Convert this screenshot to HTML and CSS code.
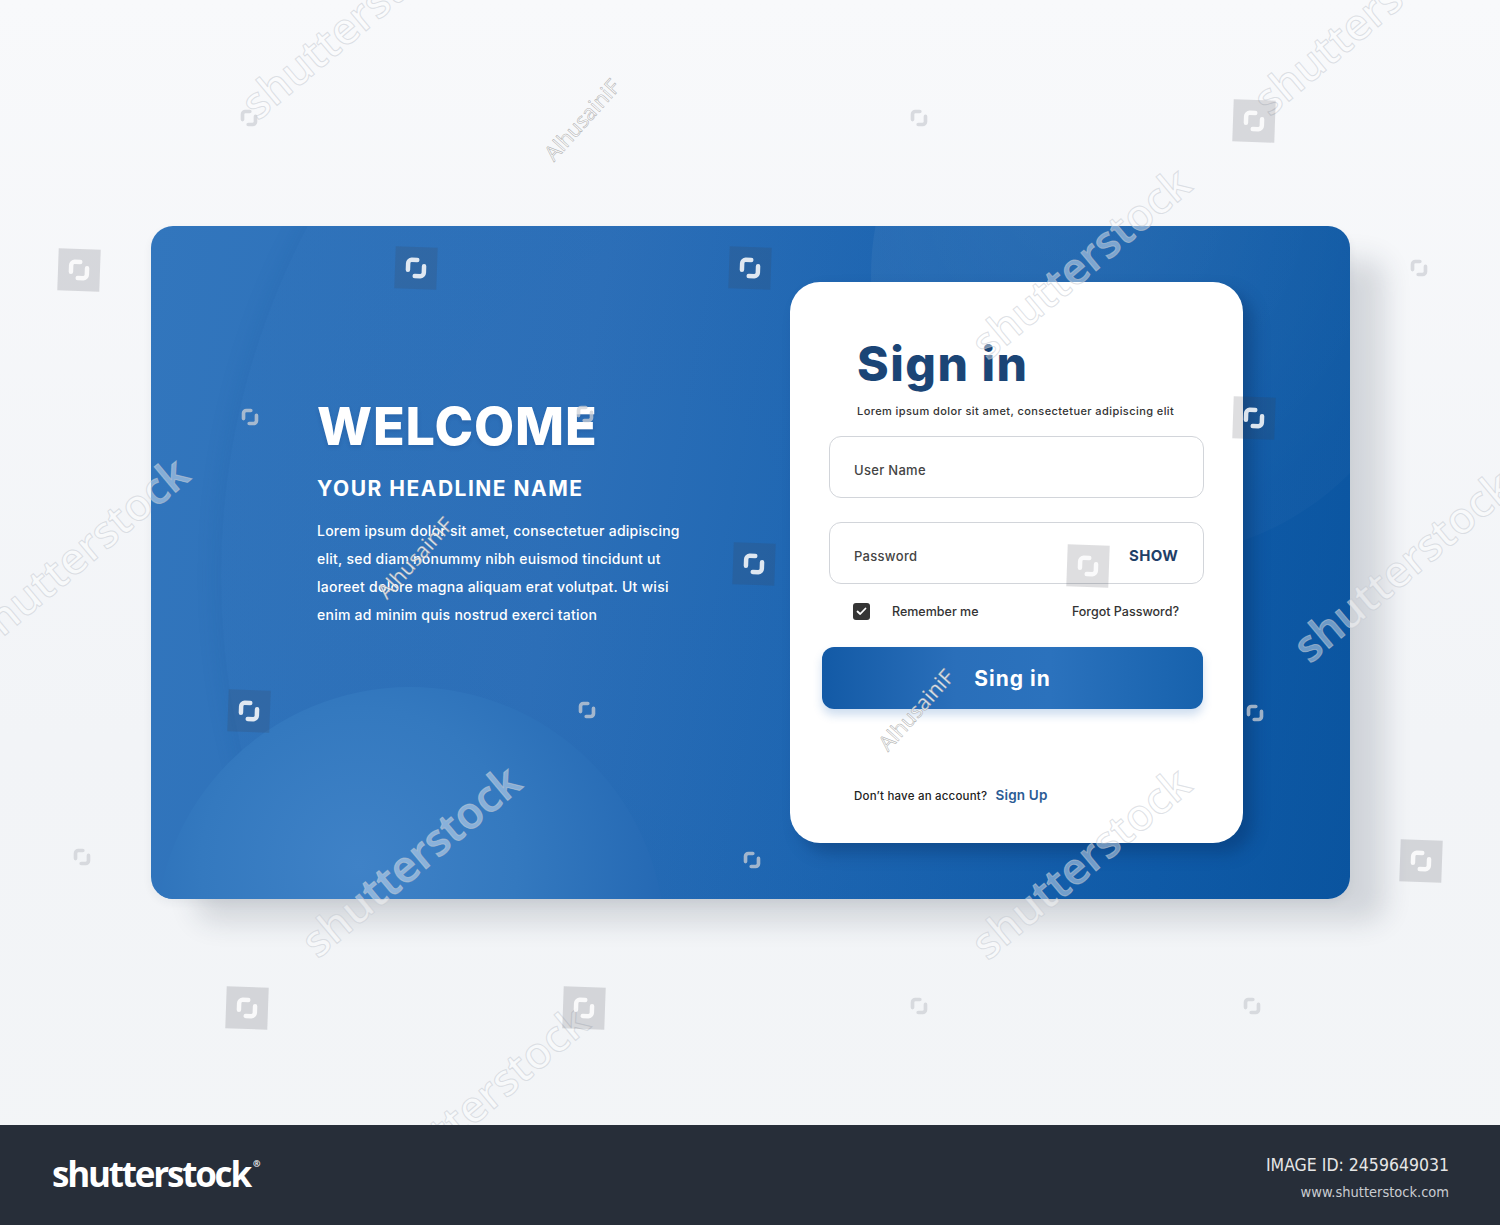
FILE: index.html
```html
<!DOCTYPE html>
<html lang="en">
<head>
<meta charset="utf-8">
<title>Sign in</title>
<link rel="stylesheet" href="styles.css">
</head>
<body>
<svg class="defs" width="0" height="0" aria-hidden="true">
  <defs>
    <symbol id="ss-mark" viewBox="0 0 42 42">
      <path d="M13 23 V16.5 a3.5 3.5 0 0 1 3.5 -3.5 H22" fill="none" stroke-width="4.5" stroke-linecap="round"/>
      <path d="M29 19 V25.5 a3.5 3.5 0 0 1 -3.5 3.5 H20" fill="none" stroke-width="4.5" stroke-linecap="round"/>
    </symbol>
  </defs>
</svg>

<main class="stage">
  <section class="panel">
    <div class="deco deco-arc"></div>
    <div class="deco deco-top"></div>
    <div class="deco deco-bottom"></div>

    <div class="intro">
      <h1 class="welcome">WELCOME</h1>
      <h2 class="headline">YOUR HEADLINE NAME</h2>
      <p class="intro-text">Lorem ipsum dolor sit amet, consectetuer adipiscing<br>elit, sed diam nonummy nibh euismod tincidunt ut<br>laoreet dolore magna aliquam erat volutpat. Ut wisi<br>enim ad minim quis nostrud exerci tation</p>
    </div>

    <form class="signin">
      <h3 class="signin-title">Sign in</h3>
      <p class="signin-sub">Lorem ipsum dolor sit amet, consectetuer adipiscing elit</p>
      <div class="field"><span class="field-label">User Name</span></div>
      <div class="field field-pass"><span class="field-label">Password</span><span class="show">SHOW</span></div>
      <div class="options">
        <span class="remember">
          <span class="check"><svg width="11" height="9" viewBox="0 0 11 9"><path d="M1.5 4.5 L4.2 7 L9.5 1.5" fill="none" stroke="#fff" stroke-width="1.8" stroke-linecap="round" stroke-linejoin="round"/></svg></span>
          Remember me
        </span>
        <span class="forgot">Forgot Password?</span>
      </div>
      <button type="button" class="submit">Sing in</button>
      <p class="signup">Don’t have an account? <span class="signup-link">Sign Up</span></p>
    </form>
  </section>
</main>

<footer class="footer">
  <div class="logo">shutterstock<span class="reg">®</span></div>
  <div class="meta">
    <div class="meta-id">IMAGE ID: 2459649031</div>
    <div class="meta-url">www.shutterstock.com</div>
  </div>
</footer>

<div class="watermarks" aria-hidden="true">
  <span class="wm-text wt1">shutterstock</span>
  <span class="wm-text wt2">shutterstock</span>
  <span class="wm-text wt3">shutterstock</span>
  <span class="wm-text wt4">shutterstock</span>
  <span class="wm-text wt5">shutterstock</span>
  <span class="wm-text wt6">shutterstock</span>
  <span class="wm-text wt7">shutterstock</span>
  <span class="wm-text wt8">shutterstock</span>
  <span class="wm-name wn1">AlhusainiF</span>
  <span class="wm-name wn2">AlhusainiF</span>
  <span class="wm-name wn3">AlhusainiF</span>

  <svg class="wm-box wb1"><use href="#ss-mark"/></svg>
  <svg class="wm-box wb2"><use href="#ss-mark"/></svg>
  <svg class="wm-box wb3"><use href="#ss-mark"/></svg>
  <svg class="wm-box wb4"><use href="#ss-mark"/></svg>
  <svg class="wm-box wb5"><use href="#ss-mark"/></svg>
  <svg class="wm-box wb6"><use href="#ss-mark"/></svg>
  <svg class="wm-box wb7"><use href="#ss-mark"/></svg>
  <svg class="wm-box wb8"><use href="#ss-mark"/></svg>
  <svg class="wm-box wb9"><use href="#ss-mark"/></svg>
  <svg class="wm-box wb10"><use href="#ss-mark"/></svg>
  <svg class="wm-box wb11"><use href="#ss-mark"/></svg>

  <svg class="wm-corner wc1"><use href="#ss-mark"/></svg>
  <svg class="wm-corner wc2"><use href="#ss-mark"/></svg>
  <svg class="wm-corner wc3"><use href="#ss-mark"/></svg>
  <svg class="wm-corner wc4"><use href="#ss-mark"/></svg>
  <svg class="wm-corner wc5"><use href="#ss-mark"/></svg>
  <svg class="wm-corner wc6"><use href="#ss-mark"/></svg>
  <svg class="wm-corner wc7"><use href="#ss-mark"/></svg>
  <svg class="wm-corner wc8"><use href="#ss-mark"/></svg>
  <svg class="wm-corner wc9"><use href="#ss-mark"/></svg>
  <svg class="wm-corner wc10"><use href="#ss-mark"/></svg>
  <svg class="wm-corner wc11"><use href="#ss-mark"/></svg>
</div>
</body>
</html>
```
FILE: styles.css
```css
* { box-sizing: border-box; }

html, body {
  margin: 0;
  padding: 0;
}

body {
  width: 1500px;
  height: 1225px;
  overflow: hidden;
  position: relative;
  font-family: Inter, "Open Sans", "Liberation Sans", sans-serif;
  background: linear-gradient(180deg, #f8f9fb 0%, #f2f4f7 60%, #f3f5f7 100%);
}

.defs { position: absolute; width: 0; height: 0; }

/* ---------- stage & blue panel ---------- */
.stage {
  height: 1125px;
  padding: 226px 0 0 151px;
}

.panel {
  position: relative;
  width: 1199px;
  height: 673px;
  border-radius: 22px;
  overflow: hidden;
  display: flex;
  background: linear-gradient(100deg, #3276bd 0%, #2c6fb8 35%, #1c65b1 60%, #0f5ba8 85%, #0a55a0 100%);
  box-shadow: 40px 28px 28px -6px rgba(40, 50, 70, 0.16), 0 4px 10px rgba(40, 50, 70, 0.06);
}

.deco {
  position: absolute;
  border-radius: 50%;
  pointer-events: none;
}

.deco-arc {
  width: 1500px;
  height: 1500px;
  left: 70px;
  top: -400px;
  background: radial-gradient(circle at 30% 45%, rgba(255,255,255,0.0) 0%, rgba(10, 60, 130, 0.06) 100%);
  box-shadow: -6px 0 20px rgba(20, 80, 150, 0.12);
}

.deco-top {
  width: 560px;
  height: 560px;
  left: 720px;
  top: -230px;
  background: radial-gradient(circle at 35% 35%, rgba(255,255,255,0.08) 0%, rgba(255,255,255,0.02) 70%);
}

.deco-bottom {
  width: 510px;
  height: 510px;
  left: 4px;
  top: 461px;
  background: radial-gradient(circle at 40% 35%, #3f82c7 0%, #3479bf 35%, #2468b3 70%, #155daa 100%);
}

/* ---------- intro ---------- */
.intro {
  position: relative;
  width: 639px;
  flex: none;
  padding: 175px 0 0 166px;
  color: #fff;
}

.welcome {
  margin: 0;
  font-size: 52px;
  line-height: 52px;
  font-weight: 800;
  letter-spacing: 0.9px;
  text-shadow: 0 2px 4px rgba(0, 30, 80, 0.15);
}

.headline {
  margin: 25px 0 0;
  font-size: 21px;
  line-height: 22px;
  font-weight: 700;
  letter-spacing: 1.5px;
}

.intro-text {
  margin: 17px 0 0;
  font-size: 14px;
  line-height: 28px;
  font-weight: 500;
  letter-spacing: 0.25px;
  white-space: nowrap;
}

/* ---------- sign in card ---------- */
.signin {
  position: relative;
  flex: none;
  width: 453px;
  height: 561px;
  margin-top: 56px;
  padding: 58px 39px 0;
  background: #fff;
  border-radius: 30px;
  box-shadow: 10px 10px 16px rgba(5, 40, 90, 0.35);
  display: flex;
  flex-direction: column;
}

.signin-title {
  margin: 0;
  padding-left: 28px;
  font-size: 48px;
  line-height: 48px;
  font-weight: 800;
  color: #1b4576;
  letter-spacing: 1.5px;
}

.signin-sub {
  margin: 16px 0 0;
  padding-left: 28px;
  font-size: 11px;
  line-height: 14px;
  font-weight: 500;
  letter-spacing: 0.42px;
  color: #333;
  white-space: nowrap;
}

.field {
  height: 62px;
  margin-top: 18px;
  padding: 5px 25px 0 24px;
  border: 1.5px solid #d2d5da;
  border-radius: 12px;
  display: flex;
  align-items: center;
  justify-content: space-between;
}

.field-pass { margin-top: 24px; }

.field-label {
  font-size: 13px;
  font-weight: 500;
  letter-spacing: 0.3px;
  color: #444;
}

.show {
  font-size: 15px;
  font-weight: 700;
  color: #1f4068;
  letter-spacing: 0.3px;
}

.options {
  margin-top: 18px;
  height: 18px;
  padding: 0 25px 0 24px;
  display: flex;
  align-items: center;
  justify-content: space-between;
  font-size: 12.5px;
  font-weight: 500;
  color: #333;
}

.remember {
  display: flex;
  align-items: center;
  gap: 22px;
}

.check {
  width: 17px;
  height: 17px;
  border-radius: 3px;
  background: #353535;
  display: flex;
  align-items: center;
  justify-content: center;
}

.submit {
  margin: 27px 0 0 -7px;
  width: 381px;
  height: 62px;
  border: 0;
  border-radius: 12px;
  background: linear-gradient(90deg, #135aa6 0%, #2a6fba 35%, #2b72bd 60%, #1762ad 100%);
  box-shadow: 0 6px 10px rgba(30, 100, 180, 0.22);
  color: #fff;
  font-family: inherit;
  font-size: 21px;
  font-weight: 700;
  letter-spacing: 1px;
  cursor: pointer;
}

.signup {
  margin: 78px 0 0;
  padding-left: 25px;
  font-size: 11.5px;
  line-height: 16px;
  font-weight: 500;
  letter-spacing: 0.2px;
  color: #222;
}

.signup-link {
  margin-left: 5px;
  font-size: 13.5px;
  font-weight: 600;
  color: #2b5b95;
}

/* ---------- footer ---------- */
.footer {
  position: relative;
  z-index: 3;
  height: 100px;
  padding: 0 51px 0 52px;
  background: #272e39;
  display: flex;
  align-items: center;
  justify-content: space-between;
}

.logo {
  color: #fff;
  font-family: "Open Sans", Inter, sans-serif;
  font-size: 35px;
  font-weight: 700;
  letter-spacing: -2.2px;
  line-height: 1;
  margin-top: -4px;
}

.reg {
  font-size: 9px;
  vertical-align: 20px;
  margin-left: 3px;
  letter-spacing: 0;
}

.meta {
  text-align: right;
  font-family: "DejaVu Sans Condensed", "DejaVu Sans", sans-serif;
  margin-top: 6px;
}

.meta-id {
  font-size: 17.5px;
  line-height: 20px;
  color: #e6e6e6;
}

.meta-url {
  margin-top: 8px;
  font-size: 14.5px;
  line-height: 18px;
  color: #c9ccd1;
}

/* ---------- watermark overlay ---------- */
.watermarks {
  position: absolute;
  inset: 0;
  z-index: 2;
  pointer-events: none;
  overflow: hidden;
}

.wm-text {
  position: absolute;
  font-family: "Open Sans", sans-serif;
  font-size: 44px;
  font-weight: 600;
  line-height: 1;
  white-space: nowrap;
  color: rgba(255, 255, 255, 0.42);
  -webkit-text-stroke: 1px rgba(195, 200, 208, 0.55);
  transform: translate(-50%, -50%) rotate(-40deg);
}

.wt1 { left: 410px; top: 860px; }
.wt2 { left: 1080px; top: 862px; }
.wt3 { left: 1080px; top: 262px; }
.wt4 { left: 350px; top: 22px; }
.wt5 { left: 1402px; top: 565px; }
.wt6 { left: 78px; top: 552px; }
.wt7 { left: 1362px; top: 18px; }
.wt8 { left: 478px; top: 1100px; }

.wm-name {
  position: absolute;
  font-family: "Open Sans", sans-serif;
  font-size: 21px;
  font-weight: 400;
  line-height: 1;
  white-space: nowrap;
  color: rgba(255, 255, 255, 0.85);
  -webkit-text-stroke: 0.6px rgba(150, 150, 150, 0.7);
  transform: translate(-50%, -50%) rotate(-48deg);
}

.wn1 { left: 582px; top: 120px; }
.wn2 { left: 415px; top: 558px; }
.wn3 { left: 916px; top: 710px; }

.wm-box {
  position: absolute;
  width: 42px;
  height: 42px;
  background: rgba(60, 60, 70, 0.17);
  stroke: rgba(255, 255, 255, 0.85);
  transform: rotate(2deg);
}

.wb1 { left: 58px; top: 249px; }
.wb2 { left: 395px; top: 247px; }
.wb3 { left: 729px; top: 247px; }
.wb4 { left: 1233px; top: 100px; }
.wb5 { left: 733px; top: 543px; }
.wb6 { left: 1067px; top: 545px; }
.wb7 { left: 1233px; top: 397px; }
.wb8 { left: 228px; top: 690px; }
.wb9 { left: 1400px; top: 840px; }
.wb10 { left: 226px; top: 987px; }
.wb11 { left: 563px; top: 987px; }

.wm-corner {
  position: absolute;
  width: 34px;
  height: 34px;
  stroke: rgba(205, 208, 214, 0.75);
}

.wc1 { left: 232px; top: 101px; }
.wc2 { left: 902px; top: 101px; }
.wc3 { left: 233px; top: 400px; }
.wc4 { left: 570px; top: 693px; }
.wc5 { left: 1402px; top: 251px; }
.wc6 { left: 1238px; top: 696px; }
.wc7 { left: 735px; top: 843px; }
.wc8 { left: 65px; top: 840px; }
.wc9 { left: 902px; top: 989px; }
.wc10 { left: 1235px; top: 989px; }
.wc11 { left: 568px; top: 397px; }
```
